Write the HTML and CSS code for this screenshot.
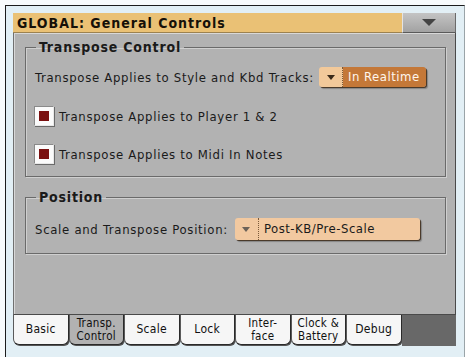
FILE: index.html
```html
<!DOCTYPE html>
<html lang="en">
<head>
    <meta charset="UTF-8">
    <title>GLOBAL: General Controls</title>
    <link rel="stylesheet" href="styles.css">
</head>
<body>
    <div class="frame">
        <div class="screen">
            <div class="titlebar">
                <div class="title">GLOBAL: General Controls</div>
                <div class="menu-btn"><span class="tri"></span></div>
            </div>

            <div class="panel">
                <fieldset class="group group-transpose">
                    <legend>Transpose Control</legend>
                    <div class="row row-first">
                        <span class="label">Transpose Applies to Style and Kbd Tracks:</span>
                        <div class="popup popup-active">
                            <span class="popup-arrow"><span class="tri small"></span></span>
                            <span class="popup-value">In Realtime</span>
                        </div>
                    </div>
                    <div class="row">
                        <span class="check on"></span>
                        <span class="label">Transpose Applies to Player 1 &amp; 2</span>
                    </div>
                    <div class="row">
                        <span class="check on"></span>
                        <span class="label">Transpose Applies to Midi In Notes</span>
                    </div>
                </fieldset>

                <fieldset class="group group-position">
                    <legend>Position</legend>
                    <div class="row">
                        <span class="label">Scale and Transpose Position:</span>
                        <div class="popup popup-wide">
                            <span class="popup-arrow"><span class="tri small grey"></span></span>
                            <span class="popup-value">Post-KB/Pre-Scale</span>
                        </div>
                    </div>
                </fieldset>
            </div>

            <div class="tabs">
                <div class="tab">Basic</div>
                <div class="tab selected two"><span>Transp.</span><span>Control</span></div>
                <div class="tab">Scale</div>
                <div class="tab">Lock</div>
                <div class="tab two"><span>Inter-</span><span>face</span></div>
                <div class="tab two"><span>Clock &amp;</span><span>Battery</span></div>
                <div class="tab">Debug</div>
                <div class="tab-filler"></div>
            </div>
        </div>
    </div>
</body>
</html>
```

FILE: styles.css
```css
body {
    margin: 0;
    padding: 5px 0 0 5px;
    background: #f8fbfc;
    font-family: "DejaVu Sans Condensed", "DejaVu Sans", sans-serif;
    font-size: 13px;
    letter-spacing: 0.7px;
    color: #1a1a1a;
}
.frame {
    width: 447px;
    height: 340px;
    border: 1px solid #1c1c1c;
    border-right-color: #9aa4a8;
    padding: 7px 4px 6px 7px;
    background: #e2eff5;
}
.screen {
    width: 443px;
    height: 333px;
    display: flex;
    flex-direction: column;
    background: #b2b2b2;
}

/* title bar */
.titlebar {
    height: 20px;
    display: flex;
    flex: none;
}
.title {
    flex: 1;
    background: #eac175;
    font-weight: bold;
    font-size: 14px;
    letter-spacing: 1px;
    line-height: 20px;
    padding-left: 4px;
    color: #151008;
    border-bottom: 1px solid #9c8250;
}
.menu-btn {
    width: 52px;
    background: linear-gradient(#c4c4c4, #a2a2a2);
    border-left: 1px solid #e4e4e4;
    border-right: 1px solid #6a6a6a;
    border-bottom: 1px solid #5a5a5a;
    display: flex;
    align-items: center;
    justify-content: center;
}
.tri {
    width: 0;
    height: 0;
    border-left: 7px solid transparent;
    border-right: 7px solid transparent;
    border-top: 7px solid #444;
}
.tri.small {
    border-left-width: 4px;
    border-right-width: 4px;
    border-top-width: 5px;
    border-top-color: #3a2a1a;
}
.tri.small.grey {
    border-top-color: #6c6258;
}

/* main panel */
.panel {
    flex: 1;
    border-left: 1px solid #707070;
    border-right: 1px solid #4a4a4a;
    border-bottom: 1px solid #4a4a4a;
    box-shadow: inset 1px 1px 0 #d8d8d8;
    padding: 6px 9px 0 11px;
}
.group {
    margin: 0;
    border: 1px solid #6a6a6a;
    box-shadow: 1px 1px 0 #cfcfcf, inset 1px 1px 0 #cfcfcf;
    padding: 8px 0 3px 9px;
}
.group legend {
    font-weight: bold;
    font-size: 14px;
    letter-spacing: 0.8px;
    padding: 0 3px;
    margin-left: 1px;
    line-height: 16px;
}
.group-position {
    margin-top: 12px;
    padding-top: 7px;
    padding-bottom: 7px;
}
.row {
    display: flex;
    align-items: center;
    gap: 5px;
    height: 38px;
}
.row-first {
    height: 28px;
    margin-bottom: 6px;
}
.group-position .row {
    height: 34px;
}
.label {
    white-space: nowrap;
}
.check {
    width: 18px;
    height: 18px;
    margin-left: -1px;
    background: #fbfbfb;
    border: 1px solid #8a8a8a;
    border-right-color: #e8e8e8;
    border-bottom-color: #e8e8e8;
    box-shadow: 1px 1px 0 #6a6a6a;
    display: flex;
    align-items: center;
    justify-content: center;
    flex: none;
}
.check.on::after {
    content: "";
    width: 10px;
    height: 10px;
    background: #7a1010;
}

/* popup buttons */
.popup {
    display: flex;
    height: 20px;
    border-radius: 3px;
    box-shadow: 1px 1px 0 #4a3a2a, 2px 2px 1px rgba(0, 0, 0, 0.25);
    overflow: hidden;
}
.popup-arrow {
    width: 23px;
    background: #f2c99a;
    border-right: 1px dotted #7a5a3a;
    display: flex;
    align-items: center;
    justify-content: center;
}
.popup-value {
    line-height: 20px;
    padding: 0 5px;
    white-space: nowrap;
    letter-spacing: 0.5px;
}
.popup-active .popup-value {
    background: #c47838;
    color: #fff6ec;
    width: 73px;
}
.popup-wide {
    height: 22px;
    margin-left: 2px;
}
.popup-wide .popup-arrow {
    background: #f2c9a0;
}
.popup-wide .popup-value {
    background: #f2c9a0;
    width: 151px;
    line-height: 22px;
}

/* tabs */
.tabs {
    height: 31px;
    display: flex;
    flex: none;
    background: #e2eff5;
}
.tab {
    width: 53.5px;
    height: 29px;
    background: #f6f6f6;
    border-left: 1px solid #5a5a5a;
    border-right: 1px solid #2a2a2a;
    border-bottom: 1px solid #2a2a2a;
    border-radius: 0 0 6px 6px;
    box-shadow: 1px 1px 0 #555;
    font-size: 12px;
    letter-spacing: 0.3px;
    line-height: 29px;
    text-align: center;
    color: #101010;
}
.tab.two {
    display: flex;
    flex-direction: column;
    justify-content: center;
    font-size: 11.5px;
    line-height: 13px;
}
.tab.selected {
    background: #b2b2b2;
}
.tab-filler {
    flex: 1;
    background: #686868;
}
```
